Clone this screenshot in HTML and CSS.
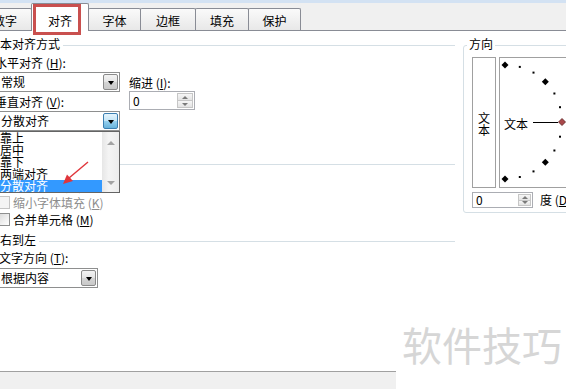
FILE: index.html
```html
<!DOCTYPE html>
<html lang="zh-CN">
<head>
    <meta charset="UTF-8">
    <meta name="viewport" content="width=device-width, initial-scale=1.0">
    <title>设置单元格格式 - 对齐</title>
    <link rel="stylesheet" href="styles.css">
</head>
<body>
    <div class="dialog">
        <div class="title-edge"></div>

        <div class="tab-bar">
            <div class="tab">数字</div>
            <div class="tab active">对齐</div>
            <div class="tab">字体</div>
            <div class="tab">边框</div>
            <div class="tab">填充</div>
            <div class="tab">保护</div>
        </div>
        <div class="tab-mark"></div>

        <div class="page">
            <div class="left-col">
                <div class="group-head"><span>文本对齐方式</span><i></i></div>
                <div class="align-grid">
                    <div>
                        <div class="field-label">水平对齐 (<u>H</u>):</div>
                        <div class="combo">
                            <span class="combo-text">常规</span>
                            <span class="combo-btn"></span>
                        </div>
                        <div class="field-label gap-top">垂直对齐 (<u>V</u>):</div>
                        <div class="combo open">
                            <span class="combo-text">分散对齐</span>
                            <span class="combo-btn"></span>
                            <div class="drop-list">
                                <ul>
                                    <li>靠上</li>
                                    <li>居中</li>
                                    <li>靠下</li>
                                    <li>两端对齐</li>
                                    <li class="selected">分散对齐</li>
                                </ul>
                                <div class="scroll-track">
                                    <span class="arrow-up"></span>
                                    <span class="arrow-down"></span>
                                </div>
                            </div>
                        </div>
                    </div>
                    <div class="indent">
                        <div class="field-label">缩进 (<u>I</u>):</div>
                        <div class="spin indent-spin">
                            <span class="spin-text">0</span>
                            <span class="spin-btns"><b class="up"></b><b class="down"></b></span>
                        </div>
                    </div>
                </div>

                <div class="group-head control-head"><span>文本控制</span><i></i></div>
                <div class="check-list">
                    <div class="check-row"><span class="checkbox"></span>自动换行 (<u>W</u>)</div>
                    <div class="check-row disabled"><span class="checkbox"></span>缩小字体填充 (<u>K</u>)</div>
                    <div class="check-row"><span class="checkbox"></span>合并单元格 (<u>M</u>)</div>
                </div>

                <div class="group-head rtl-head"><span>从右到左</span><i></i></div>
                <div class="field-label dir-label">文字方向 (<u>T</u>):</div>
                <div class="combo dir-combo">
                    <span class="combo-text">根据内容</span>
                    <span class="combo-btn"></span>
                </div>
            </div>

            <div class="right-col">
                <div class="orient-group">
                    <div class="orient-title">方向</div>
                    <div class="orient-boxes">
                        <div class="vert-text">文<br>本</div>
                        <div class="dial">
                            <svg width="80" height="129" viewBox="1 1 80 129">
                                <g fill="#000">
                                    <polygon points="6,4.5 9.5,8 6,11.5 2.5,8"/>
                                    <polygon points="46.3,21.2 49.8,24.7 46.3,28.2 42.8,24.7"/>
                                    <polygon points="46.3,101.8 49.8,105.3 46.3,108.8 42.8,105.3"/>
                                    <polygon points="6,118.5 9.5,122 6,125.5 2.5,122"/>
                                    <rect x="19.8" y="8.9" width="2" height="2"/>
                                    <rect x="33.5" y="14.6" width="2" height="2"/>
                                    <rect x="54.4" y="35.5" width="2" height="2"/>
                                    <rect x="60" y="49.2" width="2" height="2"/>
                                    <rect x="60" y="78.7" width="2" height="2"/>
                                    <rect x="54.4" y="92.5" width="2" height="2"/>
                                    <rect x="33.5" y="113.4" width="2" height="2"/>
                                    <rect x="19.8" y="119" width="2" height="2"/>
                                </g>
                                <text x="5" y="72" class="dial-text">文本</text>
                                <line x1="34" y1="65.5" x2="59" y2="65.5" stroke="#000" stroke-width="1"/>
                                <polygon points="63,61.5 66.5,65 63,68.5 59.5,65" fill="#a9484a" stroke="#5a2020" stroke-width="0.8"/>
                            </svg>
                        </div>
                    </div>
                    <div class="degree-row">
                        <div class="spin degree-spin">
                            <span class="spin-text">0</span>
                            <span class="spin-btns"><b class="up"></b><b class="down"></b></span>
                        </div>
                        <span class="degree-label">度 (<u>D</u>)</span>
                    </div>
                </div>
            </div>
        </div>

        <div class="footer"></div>

        <svg class="pointer" width="40" height="35" viewBox="0 0 40 35">
            <line x1="33" y1="7" x2="14" y2="23" stroke="#e0363b" stroke-width="1.4"/>
            <polygon points="8,29 12,19.5 18,26" fill="#e0363b"/>
        </svg>

        <div class="watermark">软件技巧</div>
    </div>
</body>
</html>
```

FILE: styles.css
```css
* {
    margin: 0;
    padding: 0;
    box-sizing: border-box;
}

html,
body {
    width: 566px;
    height: 389px;
    overflow: hidden;
}

body {
    font-family: "Noto Sans CJK SC", "Noto Sans", sans-serif;
    font-size: 12px;
    line-height: 12px;
    color: #000;
    background: #fff;
}

u {
    text-decoration: underline;
}

.dialog {
    position: relative;
    height: 389px;
}

.title-edge {
    height: 3px;
    background: #d3e2f3;
}

/* tabs */

.tab-bar {
    display: flex;
    align-items: flex-end;
    height: 28px;
    background: #f0f0f0;
    border-bottom: 1px solid #898c95;
}

.tab {
    height: 22px;
    padding-top: 6px;
    text-align: center;
    border: 1px solid #898c95;
    border-bottom: none;
    border-radius: 2px 2px 0 0;
    margin-right: -1px;
    background: linear-gradient(#fafafa, #e8e8e8);
    flex-shrink: 0;
}

.tab:nth-child(1) { width: 54px; margin-left: -22px; }
.tab:nth-child(2) { width: 58px; }
.tab:nth-child(3) { width: 53px; }
.tab:nth-child(4) { width: 56px; }
.tab:nth-child(5) { width: 54px; }
.tab:nth-child(6) { width: 53px; }

.tab.active {
    height: 28px;
    padding-top: 11px;
    margin-bottom: -1px;
    background: #fff;
    position: relative;
    z-index: 1;
}

.tab-mark {
    position: absolute;
    left: 33px;
    top: 4px;
    width: 48px;
    height: 31px;
    border: 3px solid #c9504f;
    z-index: 3;
}

/* page */

.page {
    display: flex;
    height: 340px;
}

.left-col {
    width: 467px;
    margin-left: -12px;
    padding-top: 7px;
    position: relative;
    flex-shrink: 0;
}

.right-col {
    flex: 1;
    min-width: 0;
    padding: 7px 0 0 8px;
}

.group-head {
    display: flex;
    height: 12px;
}

.group-head span {
    white-space: nowrap;
}

.group-head i {
    flex: 1;
    height: 0;
    border-top: 1px solid #d5dfe5;
    margin: 7px 0 0 3px;
}

.control-head {
    margin-top: 26px;
}

.rtl-head {
    margin-top: 6px;
}

.field-label {
    height: 12px;
    white-space: nowrap;
}

.gap-top {
    margin-top: 4px;
}

.align-grid {
    display: grid;
    grid-template-columns: 130px auto;
    column-gap: 4px;
    margin: 7px 0 0 7px;
}

/* combo boxes */

.combo {
    position: relative;
    display: flex;
    width: 123px;
    height: 20px;
    margin: 3px 0 0 2px;
    padding: 1px;
    border: 1px solid #8e8f8f;
    background: #fff;
}

.combo-text {
    flex: 1;
    padding-left: 2px;
    line-height: 16px;
    white-space: nowrap;
}

.combo-btn {
    width: 15px;
    border: 1px solid #8a8a8a;
    border-radius: 2px;
    background: linear-gradient(#f3f3f3, #e4e4e4 50%, #d4d4d4 50%, #c9c9c9);
    display: flex;
    align-items: center;
    justify-content: center;
}

.combo-btn::after {
    content: '';
    border-top: 4px solid #000;
    border-left: 3px solid transparent;
    border-right: 3px solid transparent;
    margin-top: 1px;
}

.combo.open .combo-btn {
    border-color: #3c7fb1;
    background: linear-gradient(#e5f4fc, #c4e5f6 50%, #98d1ef 50%, #68b3db);
}

.drop-list {
    position: absolute;
    top: calc(100% + 1px);
    left: -1px;
    width: 123px;
    height: 62px;
    display: flex;
    border: 1px solid #646464;
    background: #fff;
    z-index: 4;
}

.drop-list ul {
    flex: 1;
    list-style: none;
}

.drop-list li {
    height: 12px;
    line-height: 12px;
    padding-left: 2px;
    white-space: nowrap;
}

.drop-list li.selected {
    background: #3399ff;
    color: #fff;
}

.scroll-track {
    width: 17px;
    display: flex;
    flex-direction: column;
    justify-content: space-between;
    align-items: center;
    padding: 9px 0 7px;
    background: linear-gradient(90deg, #e6e6e6, #f4f4f4 40%, #ececec);
}

.arrow-up {
    border-bottom: 4px solid #a3a3a3;
    border-left: 4px solid transparent;
    border-right: 4px solid transparent;
}

.arrow-down {
    border-top: 4px solid #a3a3a3;
    border-left: 4px solid transparent;
    border-right: 4px solid transparent;
}

.dir-label {
    margin: 6px 0 0 11px;
}

.dir-combo {
    width: 101px;
    margin: 4px 0 0 9px;
}

/* spinners */

.indent {
    padding-top: 20px;
}

.spin {
    display: flex;
    border: 1px solid #abadb3;
    background: #fff;
    padding: 1px;
}

.indent-spin {
    width: 66px;
    height: 19px;
    margin-top: 2px;
}

.spin-text {
    flex: 1;
    padding-left: 2px;
    line-height: 15px;
}

.spin-btns {
    width: 16px;
    display: flex;
    flex-direction: column;
}

.spin-btns b {
    flex: 1;
    display: flex;
    align-items: center;
    justify-content: center;
    border: 1px solid #c6c6c6;
    background: linear-gradient(#f6f6f6, #e3e3e3);
}

.spin-btns b + b {
    border-top: none;
}

.spin-btns .up::after {
    content: '';
    border-bottom: 3px solid #7a7a7a;
    border-left: 3px solid transparent;
    border-right: 3px solid transparent;
}

.spin-btns .down::after {
    content: '';
    border-top: 3px solid #7a7a7a;
    border-left: 3px solid transparent;
    border-right: 3px solid transparent;
}

/* checkboxes */

.check-list {
    margin: 8px 0 0 9px;
}

.check-row {
    display: flex;
    align-items: center;
    height: 17px;
    white-space: nowrap;
}

.checkbox {
    width: 13px;
    height: 13px;
    margin-right: 3px;
    border: 1px solid #8e8f8f;
    background: linear-gradient(135deg, #d8d8d8, #f4f4f4 70%, #fff);
}

.check-row.disabled {
    color: #8d8d8d;
}

.check-row.disabled .checkbox {
    border-color: #c4c4c4;
    background: #f4f4f4;
}

/* orientation */

.orient-group {
    width: 120px;
    margin-top: 7px;
    padding: 0 0 4px 8px;
    border: 1px solid #d5dfe5;
    border-radius: 3px;
}

.orient-title {
    width: fit-content;
    margin: -8px 0 0 -5px;
    padding: 0 2px;
    background: #fff;
}

.orient-boxes {
    display: flex;
    gap: 3px;
    margin-top: 7px;
}

.vert-text {
    width: 24px;
    height: 131px;
    border: 1px solid #a0a0a0;
    display: flex;
    align-items: center;
    justify-content: center;
    text-align: center;
    padding-top: 2px;
}

.dial {
    width: 82px;
    height: 131px;
    border: 1px solid #a0a0a0;
    flex-shrink: 0;
}

.dial svg {
    display: block;
}

.dial-text {
    font-family: "Noto Sans CJK SC", sans-serif;
    font-size: 12px;
}

.degree-row {
    display: flex;
    align-items: center;
    margin-top: 4px;
    white-space: nowrap;
}

.degree-spin {
    width: 61px;
    height: 16px;
}

.degree-spin .spin-text {
    line-height: 12px;
}

.degree-spin .spin-btns {
    width: 13px;
}

.degree-label {
    margin-left: 7px;
}

/* bottom */

.footer {
    width: 396px;
    height: 18px;
    background: #f0f0f0;
    border-top: 1px solid #a0a0a0;
}

.pointer {
    position: absolute;
    left: 55px;
    top: 155px;
    z-index: 5;
}

.watermark {
    position: absolute;
    left: 396px;
    top: 316px;
    width: 170px;
    height: 73px;
    padding: 8px 0 0 6px;
    background: #fff;
    color: #d6d6d6;
    font-size: 40px;
    line-height: 40px;
    white-space: nowrap;
}
```
